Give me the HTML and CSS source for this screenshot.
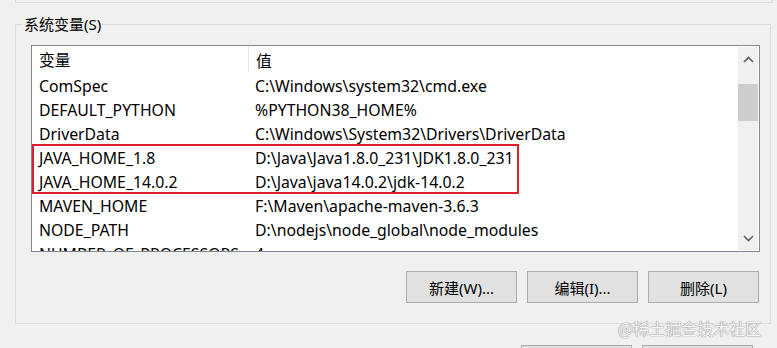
FILE: index.html
```html
<!DOCTYPE html>
<html lang="zh-CN">
  <head>
    <meta charset="UTF-8" />
    <meta name="viewport" content="width=device-width, initial-scale=1.0" />
    <title>环境变量</title>
    <link rel="stylesheet" href="styles.css">
  </head>

  <body>
    <div class="prev-group"></div>

    <fieldset class="group">
      <legend>系统变量(S)</legend>

      <div class="list">
        <div class="list-body">
          <div class="list-header">
            <span class="col-name">变量</span>
            <span class="col-value">值</span>
          </div>
          <div class="row"><span class="col-name">ComSpec</span><span class="col-value">C:\Windows\system32\cmd.exe</span></div>
          <div class="row"><span class="col-name">DEFAULT_PYTHON</span><span class="col-value">%PYTHON38_HOME%</span></div>
          <div class="row"><span class="col-name">DriverData</span><span class="col-value">C:\Windows\System32\Drivers\DriverData</span></div>
          <div class="marked">
            <div class="row"><span class="col-name">JAVA_HOME_1.8</span><span class="col-value">D:\Java\Java1.8.0_231\JDK1.8.0_231</span></div>
            <div class="row"><span class="col-name">JAVA_HOME_14.0.2</span><span class="col-value">D:\Java\java14.0.2\jdk-14.0.2</span></div>
          </div>
          <div class="row"><span class="col-name">MAVEN_HOME</span><span class="col-value">F:\Maven\apache-maven-3.6.3</span></div>
          <div class="row"><span class="col-name">NODE_PATH</span><span class="col-value">D:\nodejs\node_global\node_modules</span></div>
          <div class="row"><span class="col-name">NUMBER_OF_PROCESSORS</span><span class="col-value">4</span></div>
        </div>

        <div class="scrollbar">
          <div class="scroll-btn">
            <svg width="11" height="7" viewBox="0 0 11 7"><path d="M1 6 L5.5 1.5 L10 6" fill="none" stroke="#606060" stroke-width="1.6"/></svg>
          </div>
          <div class="scroll-track">
            <div class="scroll-thumb"></div>
          </div>
          <div class="scroll-btn">
            <svg width="11" height="7" viewBox="0 0 11 7"><path d="M1 1 L5.5 5.5 L10 1" fill="none" stroke="#606060" stroke-width="1.6"/></svg>
          </div>
        </div>
      </div>

      <div class="actions">
        <button class="btn">新建(W)...</button>
        <button class="btn">编辑(I)...</button>
        <button class="btn">删除(L)</button>
      </div>
    </fieldset>

    <!-- OK / Cancel, only their top edge is in view -->
    <div class="actions bottom">
      <button class="btn" aria-label="确定"></button>
      <button class="btn" aria-label="取消"></button>
    </div>

    <div class="watermark">@稀土掘金技术社区</div>
  </body>
</html>
```

FILE: styles.css
```css
html,
body {
  margin: 0;
  padding: 0;
  height: 100%;
  overflow: hidden;
}

body {
  background: #f0f0f0;
  color: #000;
  font-family: "Noto Sans", "Noto Sans CJK SC", sans-serif;
  font-size: 16px;
  position: relative;
}

.prev-group {
  height: 2px;
  margin: 0 4px 0 15px;
  border: 1px solid #dcdcdc;
  border-top: none;
}

.group {
  margin: 11px 6px 0 15px;
  padding: 11px 10px 20px 15px;
  border: 1px solid #dcdcdc;
}

.group legend {
  padding: 0 1px;
  margin-left: -8px;
  line-height: 20px;
  font-size: 15px;
}

.list {
  display: flex;
  height: 205px;
  border: 1px solid #828790;
  background: #fff;
  overflow: hidden;
}

.list-body {
  flex-grow: 1;
  font-size: 15.8px;
}

.list-header,
.row {
  display: flex;
  align-items: center;
}

.list-header {
  height: 28px;
}

.row {
  height: 24px;
}

.col-name {
  width: 209px;
  padding-left: 7px;
  flex-shrink: 0;
  white-space: nowrap;
}

.list-header .col-name {
  align-self: stretch;
  display: flex;
  align-items: center;
  border-right: 1px solid #e5e5e5;
  margin: 1px 0 2px;
}

.col-value {
  padding-left: 7px;
  white-space: nowrap;
}

.marked {
  position: relative;
}

.marked::after {
  content: "";
  position: absolute;
  left: 0;
  top: -2px;
  bottom: 0;
  width: 483px;
  border: 2px solid #e0202f;
}

.scrollbar {
  width: 20px;
  margin: 1px 1px 1px 0;
  display: flex;
  flex-flow: column;
  background: #f0f0f0;
  border-left: 1px solid #fff;
}

.scroll-btn {
  height: 24px;
  display: flex;
  align-items: center;
  justify-content: center;
}

.scroll-track {
  flex-grow: 1;
  padding-top: 13px;
}

.scroll-thumb {
  height: 37px;
  background: #cdcdcd;
}

.actions {
  display: flex;
  justify-content: flex-end;
  gap: 10px;
  margin-top: 19px;
  margin-right: 1px;
}

.btn {
  width: 111px;
  height: 32px;
  background: #e1e1e1;
  border: 1px solid #adadad;
  font-family: "Noto Sans", "Noto Sans CJK SC", sans-serif;
  font-size: 15px;
  color: #000;
  padding: 0;
}

.bottom {
  margin: 21px 24px 0 0;
}

.watermark {
  position: absolute;
  left: 618px;
  top: 316px;
  font-family: "Noto Sans CJK SC", sans-serif;
  font-size: 16px;
  color: #f6f6f6;
  text-shadow: 0 0 1px #8a8a8a, 0 0 1px #8a8a8a;
}
```
